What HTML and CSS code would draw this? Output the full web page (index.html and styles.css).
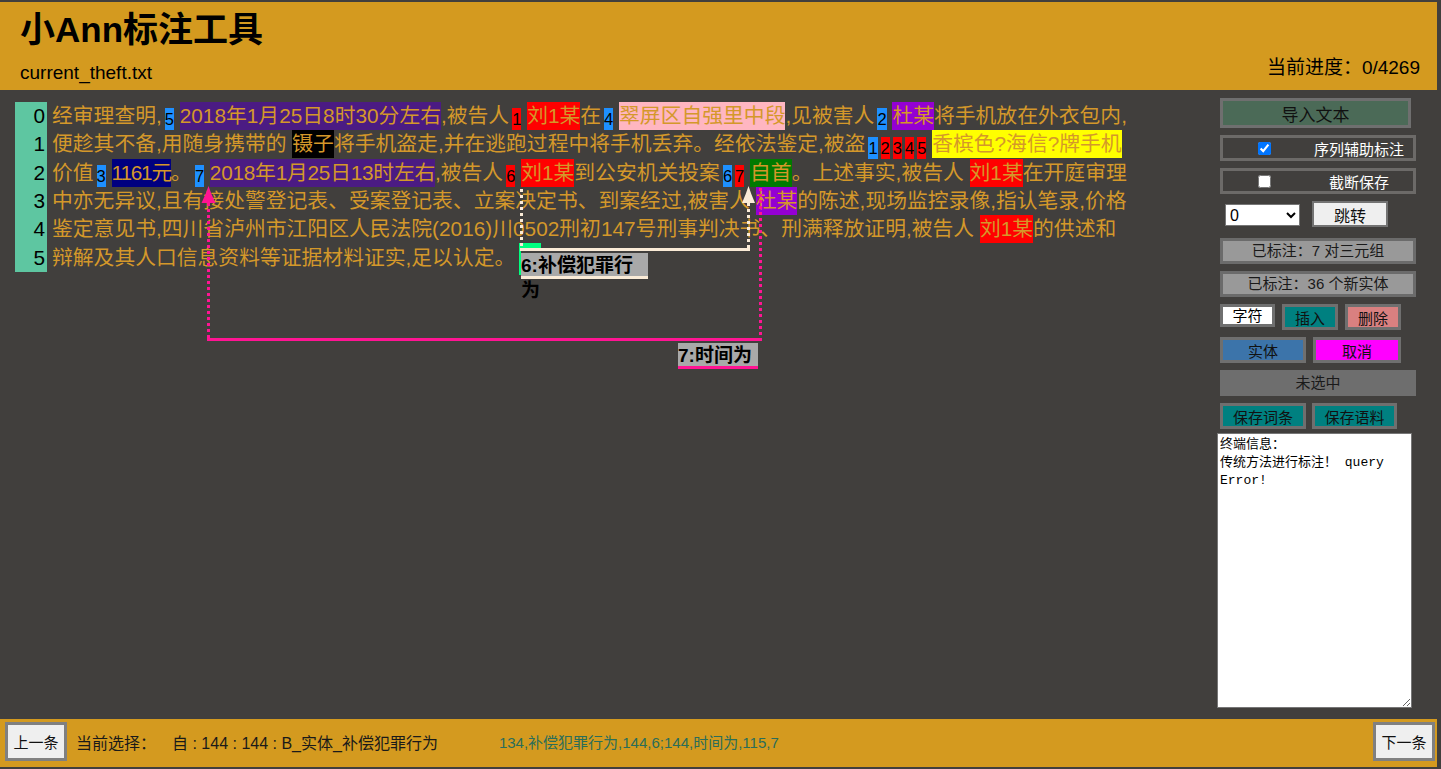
FILE: index.html
```html
<!DOCTYPE html>
<html lang="zh">
<head>
<meta charset="utf-8">
<title>小Ann标注工具</title>
<link rel="stylesheet" href="styles.css">
</head>
<body>
<div class="app">
  <header class="topbar">
    <div class="brand">
      <h1 class="title">小Ann标注工具</h1>
      <div class="filename">current_theft.txt</div>
    </div>
    <div class="progress">当前进度：0/4269</div>
  </header>

  <main class="workspace">
    <section class="editor">
      <div class="row tall"><div class="ln">0</div><div class="txt">经审理查明,<span class="tag t-blue">5</span> <span class="ent e-purple">2018年1月25日8时30分左右</span>,被告人<span class="tag t-red">1</span> <span class="ent e-red">刘1某</span>在<span class="tag t-blue">4</span> <span class="ent e-pink">翠屏区自强里中段</span>,见被害人<span class="tag t-blue">2</span> <span class="ent e-violet">杜某</span>将手机放在外衣包内,</div></div>
      <div class="row tall"><div class="ln">1</div><div class="txt">便趁其不备,用随身携带的 <span class="ent e-black">镊子</span>将手机盗走,并在逃跑过程中将手机丢弃。经依法鉴定,被盗<span class="tag t-blue">1</span><span class="tag t-red">2</span><span class="tag t-red">3</span><span class="tag t-red">4</span><span class="tag t-red">5</span> <span class="ent e-yellow">香槟色?海信?牌手机</span></div></div>
      <div class="row tall"><div class="ln">2</div><div class="txt">价值<span class="tag t-blue">3</span> <span class="ent e-navy narrow">1161元</span>。<span class="tag t-blue">7</span> <span class="ent e-purple narrow2">2018年1月25日13时左右</span>,被告人<span class="tag t-red">6</span> <span class="ent e-red">刘1某</span>到公安机关投案<span class="tag t-blue">6</span><span class="tag t-red">7</span> <span class="ent e-green">自首</span>。上述事实,被告人 <span class="ent e-red">刘1某</span>在开庭审理</div></div>
      <div class="row"><div class="ln">3</div><div class="txt">中亦无异议,且有接处警登记表、受案登记表、立案决定书、到案经过,被害人 <span class="ent e-violet">杜某</span>的陈述,现场监控录像,指认笔录,价格</div></div>
      <div class="row"><div class="ln">4</div><div class="txt">鉴定意见书,四川省泸州市江阳区人民法院(2016)川0502刑初147号刑事判决书、刑满释放证明,被告人 <span class="ent e-red">刘1某</span>的供述和</div></div>
      <div class="row"><div class="ln">5</div><div class="txt">辩解及其人口信息资料等证据材料证实,足以认定。</div></div>

      <svg class="arcs" width="1220" height="629" viewBox="0 0 1220 629">
        <rect x="519" y="153" width="22" height="6" fill="#00ff7f"/>
        <rect x="519" y="153" width="2" height="32" fill="#00ff7f"/>
        <g fill="none" stroke-width="3">
          <path d="M521.5 99 V158" stroke="#faebd7" stroke-dasharray="3 3"/>
          <path d="M748.5 158 V112" stroke="#faebd7" stroke-dasharray="3 3"/>
          <path d="M520 159.5 H750" stroke="#faebd7"/>
          <path d="M760.5 98 V248" stroke="#ff1493" stroke-dasharray="3 3"/>
          <path d="M208.5 248 V112" stroke="#ff1493" stroke-dasharray="3 3"/>
          <path d="M207 249.5 H762" stroke="#ff1493"/>
        </g>
        <path d="M748.5 96 Q751 104 755 113 L742 113 Q746 104 748.5 96 Z" fill="#faebd7"/>
        <path d="M208.5 96 Q211 104 215.5 113 L201.5 113 Q206 104 208.5 96 Z" fill="#ff1493"/>
      </svg>
      <div class="rel-label rel-6">6:补偿犯罪行为</div>
      <div class="rel-label rel-7">7:时间为</div>
    </section>

    <aside class="panel">
      <button class="btn btn-import">导入文本</button>
      <label class="check-row"><span class="check-cell"><input type="checkbox" checked></span><span>序列辅助标注</span></label>
      <label class="check-row"><span class="check-cell"><input type="checkbox"></span><span>截断保存</span></label>
      <div class="jump-row">
        <select class="jump-select"><option>0</option></select>
        <button class="btn btn-jump">跳转</button>
      </div>
      <div class="stat">已标注：7 对三元组</div>
      <div class="stat">已标注：36 个新实体</div>
      <div class="btn-row">
        <div class="char-box">字符</div>
        <button class="btn btn-teal btn-sm">插入</button>
        <button class="btn btn-coral btn-sm">删除</button>
      </div>
      <div class="btn-row">
        <button class="btn btn-steel btn-md">实体</button>
        <button class="btn btn-magenta btn-md2">取消</button>
      </div>
      <div class="status">未选中</div>
      <div class="btn-row save-row">
        <button class="btn btn-teal btn-md">保存词条</button>
        <button class="btn btn-teal btn-md3">保存语料</button>
      </div>
      <textarea class="terminal">终端信息：
传统方法进行标注！ query Error!</textarea>
    </aside>
  </main>

  <footer class="bottombar">
    <button class="btn nav-btn">上一条</button>
    <span class="cur-label">当前选择：</span>
    <span class="cur-value">自 : 144 : 144 : B_实体_补偿犯罪行为</span>
    <span class="cur-rel">134,补偿犯罪行为,144,6;144,时间为,115,7</span>
    <span class="spacer"></span>
    <button class="btn nav-btn">下一条</button>
  </footer>
</div>
</body>
</html>
```

FILE: styles.css
```css
* { box-sizing: border-box; }
html, body { margin: 0; padding: 0; }
body {
  background: #413f3d;
  font-family: "Liberation Sans", "Noto Sans CJK SC", sans-serif;
  width: 1441px;
  height: 769px;
  overflow: hidden;
}
.app {
  width: 1437px;
  height: 765px;
  margin-top: 2px;
  display: flex;
  flex-direction: column;
}

/* header */
.topbar {
  flex: none;
  height: 88px;
  background: #d49a1f;
  display: flex;
  justify-content: space-between;
  padding: 7px 17px 6px 20px;
  color: #000;
}
.title {
  margin: 0;
  font-size: 35px;
  line-height: 42px;
  font-weight: 700;
}
.filename {
  margin-top: 11px;
  font-size: 19px;
  line-height: 22px;
}
.progress {
  align-self: flex-end;
  margin-bottom: 5px;
  font-size: 19px;
  line-height: 22px;
}

/* workspace */
.workspace {
  flex: 1;
  display: flex;
  min-height: 0;
}
.editor {
  flex: 1;
  position: relative;
  padding: 12px 0 0 15px;
}
.row {
  display: flex;
  height: 28.33px;
}
.ln {
  flex: none;
  width: 32px;
  background: #5ec6a1;
  text-align: right;
  padding-right: 2px;
  font-size: 20.8px;
  line-height: 28.33px;
  color: #000;
}
.txt {
  padding-left: 5px;
  white-space: nowrap;
  font-size: 20.8px;
  line-height: 28.33px;
  color: #d4982a;
}
.ent {
  display: inline-block;
  height: 28px;
  line-height: 28px;
  vertical-align: top;
}
.narrow { letter-spacing: -1.2px; }
.narrow2 { letter-spacing: -0.25px; }
.e-purple { background: #4b1b83; }
.e-red { background: #ff0000; }
.e-pink { background: #ffb6c1; }
.e-violet { background: #9400d3; }
.e-black { background: #000; }
.e-yellow { background: #ffff00; }
.e-navy { background: #000080; }
.e-green { background: #007a00; }

.tag {
  display: inline-block;
  margin-left: 3px;
  height: 22px;
  line-height: 23px;
  font-size: 16.5px;
  vertical-align: bottom;
  color: #000;
}
.t-blue { background: #1e90ff; }
.t-red { background: #ff0000; }

.arcs {
  position: absolute;
  left: 0;
  top: 0;
  pointer-events: none;
  overflow: visible;
}
.rel-label {
  position: absolute;
  background: #a9a9a9;
  color: #000;
  font-weight: 700;
  font-size: 19px;
  line-height: 25px;
  height: 26px;
  border-bottom: 3px solid;
}
.rel-6 { left: 521px; top: 163px; width: 127px; border-bottom-color: #faebd7; }
.rel-7 { left: 678px; top: 253px; width: 80px; border-bottom-color: #ff1493; }

/* right panel */
.panel {
  flex: none;
  width: 196px;
  margin-right: 21px;
  padding-top: 8px;
  display: flex;
  flex-direction: column;
  gap: 7px;
  font-size: 15px;
}
.btn {
  font-family: "Liberation Sans", "Noto Sans CJK SC", sans-serif;
  color: #111;
  border: 3px solid #6f6f6f;
  padding: 0;
  margin: 0;
  border-radius: 0;
  cursor: pointer;
}
.btn-import {
  width: 191px;
  height: 30px;
  background: #4b6a57;
  font-size: 17px;
}
.check-row {
  height: 26px;
  border: 3px solid #6c6a68;
  display: grid;
  grid-template-columns: 82px 1fr;
  align-items: center;
  color: #fff;
  font-size: 15px;
}
.check-row > span { text-align: center; }
.check-cell { display: flex; justify-content: center; }
.check-cell input { margin: 0; width: 13px; height: 13px; }
.jump-row {
  display: flex;
  align-items: flex-start;
  height: 26px;
  margin-bottom: 4px;
}
.jump-select {
  width: 75px;
  height: 22px;
  margin: 3px 0 0 5px;
  font-size: 16px;
  font-family: "Liberation Sans", sans-serif;
  background: #fff;
  border: 1px solid #767676;
  border-radius: 0;
  color: #000;
}
.btn-jump {
  width: 76px;
  height: 26px;
  margin-left: 12px;
  background: #efefef;
  border-width: 2px;
  border-color: #737373;
  font-size: 16px;
}
.stat {
  height: 26px;
  background: #999;
  border: 3px solid #6b6b6b;
  color: #1a1a1a;
  text-align: center;
  line-height: 20px;
  font-size: 15px;
}
.btn-row {
  display: flex;
  gap: 7px;
  height: 26px;
}
.char-box {
  width: 55px;
  height: 23px;
  background: #fff;
  border: 3px solid #6f6f6f;
  color: #000;
  text-align: center;
  line-height: 17px;
  font-size: 15px;
}
.btn-sm { width: 56px; height: 26px; font-size: 15px; }
.btn-md { width: 86px; height: 26px; font-size: 15px; }
.btn-md2 { width: 88px; height: 26px; font-size: 15px; }
.btn-md3 { width: 85px; height: 26px; font-size: 15px; }
.save-row { gap: 6px; }
.btn-teal { background: #008080; }
.btn-coral { background: #d98080; }
.btn-steel { background: #3c74aa; }
.btn-magenta { background: #ff00ff; }
.status {
  height: 26px;
  background: #6e6e6e;
  color: #1a1a1a;
  text-align: center;
  line-height: 26px;
  font-size: 15px;
}
.terminal {
  margin: -3px 0 0 -3px;
  width: 195px;
  height: 275px;
  background: #fff;
  border: 1px solid #767676;
  padding: 2px;
  font-family: "Liberation Mono", "Noto Sans CJK SC", monospace;
  font-size: 13px;
  line-height: 18px;
  color: #000;
  resize: both;
}

/* footer */
.bottombar {
  flex: none;
  height: 48px;
  background: #d49a1f;
  display: flex;
  align-items: center;
  padding: 0 2px 3px 5px;
  font-size: 16px;
  color: #1a1a1a;
}
.nav-btn {
  width: 62px;
  height: 39px;
  background: #efefef;
  border-color: #808080;
  font-size: 15px;
}
.cur-label { margin-left: 9px; }
.cur-value { margin-left: 16px; }
.cur-rel { margin-left: 61px; font-size: 15px; color: #2a6d5a; }
.spacer { flex: 1; }
```
